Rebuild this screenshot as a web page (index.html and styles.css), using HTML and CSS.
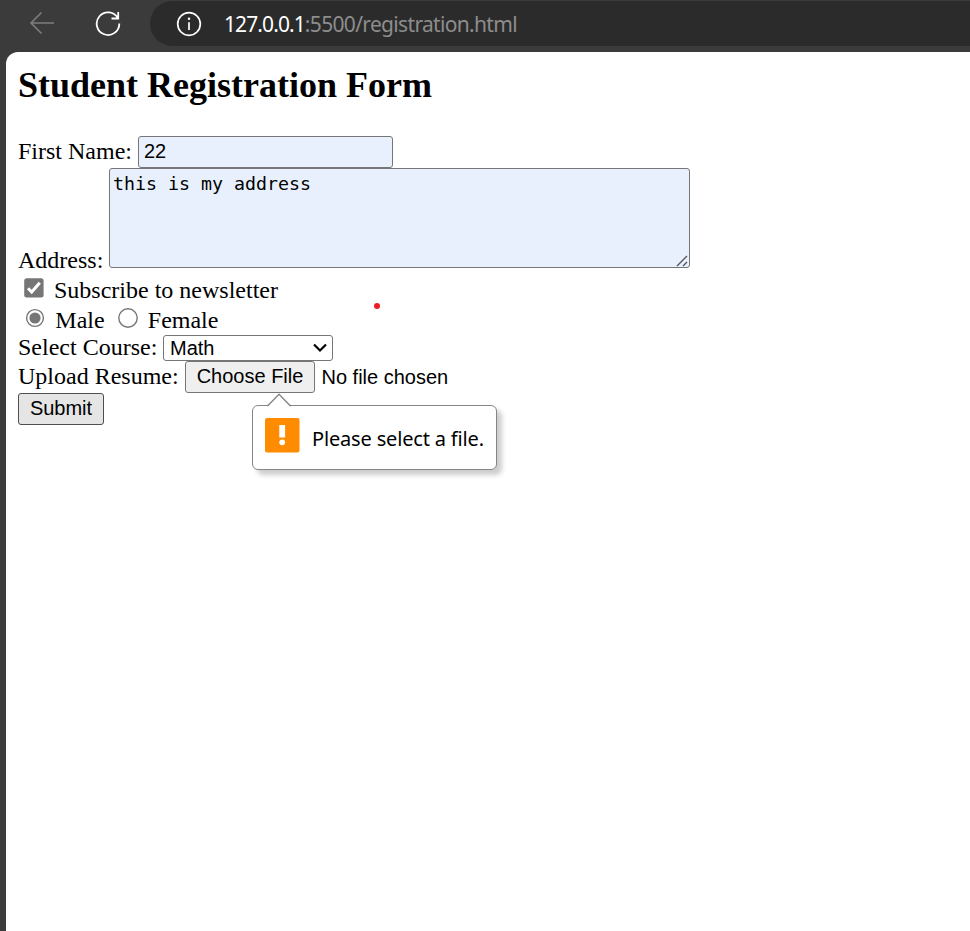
FILE: index.html
```html
<!DOCTYPE html>
<html lang="en">
<head>
<meta charset="utf-8">
<title>Student Registration Form</title>
<link rel="stylesheet" href="styles.css">
</head>
<body>
<header class="toolbar">
  <svg class="back" width="26" height="24" viewBox="0 0 26 24"><path d="M25 12H2M12.500 1.500L2 12l10.500 10.500"/></svg>
  <svg class="reload" width="26" height="26" viewBox="0 0 26 26"><path d="M23 7.400A11.300 11.300 0 1 0 24.300 12.500M23.200 1v6.500h-6.700"/></svg>
  <div class="address-bar">
    <svg class="info" width="26" height="26" viewBox="0 0 26 26"><circle cx="13" cy="13" r="11.300"/><path d="M13 11.300v7.700"/><circle class="info-dot" cx="13" cy="7.800" r="1.200"/></svg>
    <div class="url"><span class="host">127.0.0.1</span><span class="path">:5500/registration.html</span></div>
  </div>
</header>
<main class="page">
  <h2>Student Registration Form</h2>
  <form>
    <div class="row row-name">
      <label class="l-name" for="name">First Name:</label>
      <input id="name" class="field" type="text" value="22">
    </div>
    <div class="row row-address">
      <label class="l-address" for="address">Address:</label>
      <div class="area">
        <textarea id="address" class="field">this is my address</textarea>
        <svg class="grip" width="12" height="12" viewBox="0 0 12 12"><path d="M1 11L11 1M7 11l4-4"/></svg>
      </div>
    </div>
    <div class="row row-news">
      <svg class="check" width="20" height="20" viewBox="0 0 20 20"><rect x=".2" y=".2" width="19.400" height="19.400" rx="2.500"/><path d="M4 10.300l3.700 3.800L15.800 4.700"/></svg>
      <label class="l-news">Subscribe to newsletter</label>
    </div>
    <div class="row row-gender">
      <svg class="radio radio-on" width="20" height="20" viewBox="0 0 20 20"><circle cx="10" cy="10" r="8.400"/><circle class="dot" cx="10" cy="10" r="5.600"/></svg>
      <label class="l-male">Male</label>
      <svg class="radio" width="20" height="20" viewBox="0 0 20 20"><circle cx="10" cy="10" r="9.200"/></svg>
      <label class="l-female">Female</label>
    </div>
    <div class="row row-course">
      <label class="l-course">Select Course:</label>
      <div class="select"><span>Math</span><svg width="14" height="10" viewBox="0 0 14 10"><path d="M1 1.500l6 6 6-6"/></svg></div>
    </div>
    <div class="row row-file">
      <label class="l-file">Upload Resume:</label>
      <button class="choose" type="button">Choose File</button>
      <span class="none">No file chosen</span>
      <div class="bubble">
        <svg class="tip" width="26" height="14" viewBox="0 0 26 14"><path d="M1 12.500L13 .800l12 11.700V14H1z"/><path class="tip-line" d="M1 12.500h1L13 1.200l11 11.300h1"/></svg>
        <svg class="warn" width="35" height="35" viewBox="0 0 35 35"><rect class="warn-box" width="34.500" height="34.500" rx="2"/><path d="M14.300 7h5.800v12.500h-5.800z"/><circle cx="17.200" cy="24.300" r="2.900"/></svg>
        <span>Please select a file.</span>
      </div>
    </div>
    <button class="submit" type="button">Submit</button>
  </form>
  <div class="pointer"></div>
</main>
</body>
</html>
```
FILE: styles.css
```css
* { box-sizing: border-box; }
body {
  margin: 0;
  height: 931px;
  overflow: hidden;
  background: #3b3b3b;
  display: flex;
  flex-direction: column;
  color: #000;
}
svg { display: block; flex: none; fill: none; }
.toolbar { height: 52px; flex: none; display: flex; align-items: flex-start; }
.back { margin: 11px 0 0 28.500px; stroke: #7d7d7d; stroke-width: 1.6; }
.reload { margin: 11px 0 0 40.500px; stroke: #fff; stroke-width: 1.8; }
.address-bar {
  flex: 1;
  height: 45px;
  margin: 1px 0 0 29px;
  border-radius: 23px 0 0 23px;
  background: #2b2b2b;
  display: flex;
  align-items: flex-start;
}
.info { margin: 9.500px 0 0 26px; stroke: #fff; stroke-width: 1.7; }
.info .info-dot { fill: #fff; stroke: none; }
.url {
  margin: 8px 0 0 22px;
  font: 21px/30px "Noto Sans", sans-serif;
  white-space: nowrap;
  color: #8d8d8d;
}
.host { color: #fff; letter-spacing: -.9px; }
.path { letter-spacing: -.67px; }
.page {
  position: relative;
  flex: 1;
  margin-left: 6px;
  padding: 12px;
  border-radius: 12px 0 0 0;
  background: #fff;
}
h2 {
  margin: 0;
  height: 72px;
  font: bold 36px/42px "Liberation Serif", serif;
  white-space: nowrap;
}
.row { display: flex; align-items: flex-start; }
label { flex: none; font: 24px/28px "Liberation Serif", serif; white-space: nowrap; }
.field {
  display: block;
  margin: 0;
  border: 1px solid #767676;
  border-radius: 3px;
  background: #e8f0fe;
  color: #000;
  outline: 0;
}
.row-name { height: 32px; }
.l-name { width: 120px; padding-top: 1px; }
input.field { width: 255px; height: 32px; padding: 0 5px 2px; font: 20px "Liberation Sans", sans-serif; }
.row-address { height: 108px; }
.l-address { width: 91px; padding-top: 78px; }
.area { position: relative; }
textarea.field {
  width: 581px;
  height: 100px;
  padding: 3px;
  resize: none;
  overflow: hidden;
  font: 18.270px/23px "DejaVu Sans Mono", monospace;
}
.grip { position: absolute; right: 2px; bottom: 1px; stroke: #555; stroke-width: 1.4; }
.row-news { height: 30px; }
.check { margin: 2px 10px 0 6px; fill: #767676; }
.check path { fill: none; stroke: #fff; stroke-width: 3; }
.row-gender { height: 29px; }
.radio { margin-top: 2px; stroke: #767676; stroke-width: 1.4; }
.radio-on { margin-left: 7px; }
.radio .dot { fill: #767676; stroke: none; }
.l-male { width: 62.500px; margin-left: 10.300px; }
.l-female { margin-left: 10px; }
.row-course { height: 26px; }
.l-course { width: 145px; margin-top: -2px; }
.select {
  width: 170px;
  height: 26px;
  padding: 0 5px 0 6px;
  border: 1px solid #767676;
  border-radius: 3px;
  display: flex;
  align-items: center;
  justify-content: space-between;
  font: 20px/24px "Liberation Sans", sans-serif;
}
.select svg { stroke: #000; stroke-width: 2.2; }
.row-file { position: relative; height: 32px; }
.l-file { width: 167px; padding-top: 1px; }
button {
  height: 32px;
  margin: 0;
  padding: 0 0 2px;
  border: 1px solid #767676;
  border-radius: 3px;
  background: #efefef;
  color: #000;
  font: 20px "Liberation Sans", sans-serif;
  white-space: nowrap;
}
.choose { width: 130px; }
.none { margin: 4px 0 0 6.500px; font: 20px/24px "Liberation Sans", sans-serif; white-space: nowrap; }
.submit { display: block; width: 86px; background: #e5e5e5; border-color: #4f4f4f; }
.bubble {
  position: absolute;
  left: 234px;
  top: 44px;
  width: 245px;
  height: 65px;
  padding: 12px;
  border: 1px solid #858585;
  border-radius: 6px;
  background: #fff;
  box-shadow: 5px 5px 5px rgba(0, 0, 0, .2);
  display: flex;
  align-items: flex-start;
  font: 20px/30px "Noto Sans", sans-serif;
  letter-spacing: -.17px;
  white-space: nowrap;
}
.bubble span { margin: 6px 0 0 12px; }
.tip { position: absolute; left: 13px; top: -13px; fill: #fff; }
.tip .tip-line { fill: none; stroke: #858585; stroke-width: 1.3; }
.warn { fill: #fff; }
.warn .warn-box { fill: #ff8c00; }
.pointer {
  position: absolute;
  left: 367.500px;
  top: 251px;
  width: 6px;
  height: 6px;
  border-radius: 50%;
  background: #ec1c24;
}
```
